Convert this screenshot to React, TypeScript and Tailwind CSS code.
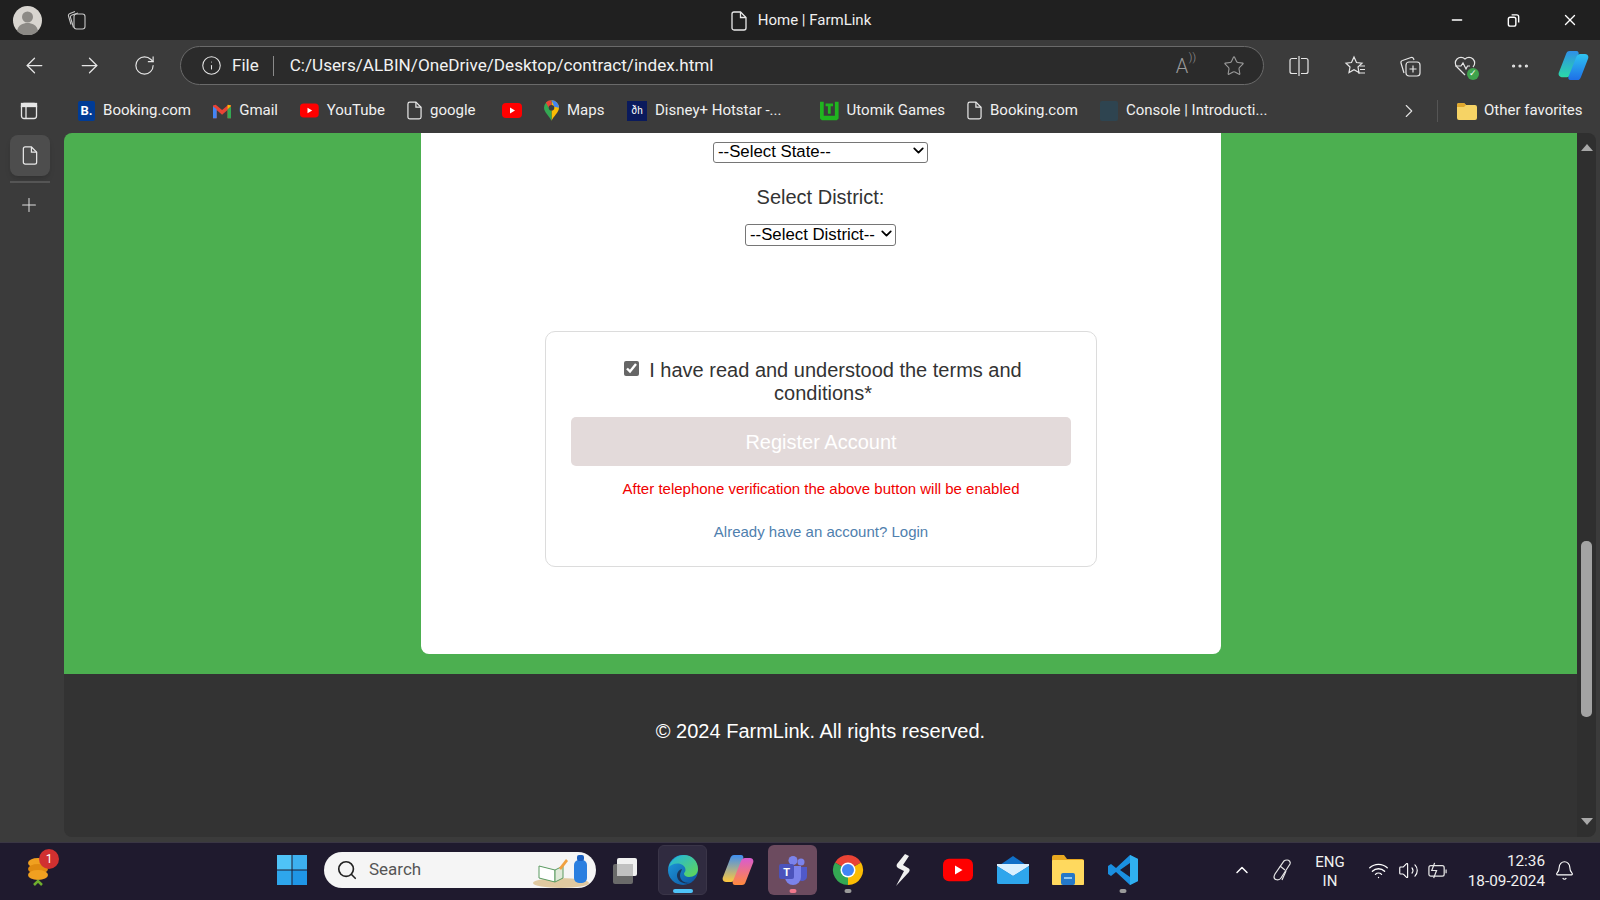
import React from "react";
import { ArrowLeft, ArrowRight, RotateCw, Info, Star, MoreHorizontal, ChevronRight, ChevronUp, ChevronDown, Plus, Minus, X, Search, Wifi, Bell, Volume2 } from "lucide-react";

const ui = "font-['Roboto','Noto_Sans',sans-serif]";

function Doc({ className = "w-[16px] h-[20px]" }: { className?: string }) {
  return (
    <svg viewBox="0 0 16 20" className={className} fill="none" stroke="#e8e8e8" strokeWidth="1.3">
      <path d="M3 1h6.5L15 6.5V17a2 2 0 0 1-2 2H3a2 2 0 0 1-2-2V3a2 2 0 0 1 2-2z" />
      <path d="M9.5 1v5.5H15" />
    </svg>
  );
}

function YT({ className = "w-[20px] h-[15px]" }: { className?: string }) {
  return (
    <svg viewBox="0 0 20 15" className={className}>
      <rect width="20" height="15" rx="4" fill="#f00" />
      <path d="M8 4.5l5 3-5 3z" fill="#fff" />
    </svg>
  );
}

function Edge() {
  return (
    <svg viewBox="0 0 32 32" className="w-[32px] h-[34px]">
      <defs>
        <linearGradient id="e1" x1="0" y1="0" x2="1" y2="1">
          <stop offset="0" stopColor="#1f9fe0" />
          <stop offset="1" stopColor="#0c4f9c" />
        </linearGradient>
        <linearGradient id="e2" x1="0" y1="0" x2="1" y2="1">
          <stop offset="0" stopColor="#1fb4e8" />
          <stop offset="1" stopColor="#63d84f" />
        </linearGradient>
      </defs>
      <circle cx="16" cy="16" r="15" fill="url(#e1)" />
      <path d="M1.500 14C4 5 11 1 17 1c8 0 14 6 14 14 0 5-4 8-9 8-3 0-5-1.500-5-3.500 0-1 1.500-1.500 1.500-3.500 0-4-4-6.500-8-6.500-4 0-7.500 2-9 4z" fill="url(#e2)" />
      <path d="M15 15c-4 1-6 5-4.500 9 1.500 4 7 6.500 12 5-6 0-9.500-3-9.500-7.500 0-3 1.500-4.500 2-6.500z" fill="#1f1a2e" opacity="0.7" />
    </svg>
  );
}

function Chrome() {
  return (
    <svg viewBox="0 0 32 32" className="w-[32px] h-[34px]">
      <path d="M16 16L3 8.5A15 15 0 0 1 29 8.5z" fill="#ea4335" />
      <path d="M16 16L29 8.5A15 15 0 0 1 16 31z" fill="#fbbc04" />
      <path d="M16 16L16 31A15 15 0 0 1 3 8.5z" fill="#34a853" />
      <circle cx="16" cy="16" r="7.5" fill="#fff" />
      <circle cx="16" cy="16" r="6" fill="#4285f4" />
    </svg>
  );
}

function Copilot({ className = "w-[32px] h-[32px]" }: { className?: string }) {
  return (
    <svg viewBox="0 0 32 32" className={className}>
      <defs>
        <linearGradient id="c1" x1="0" y1="0" x2="0" y2="1">
          <stop offset="0" stopColor="#2f8fe8" />
          <stop offset="1" stopColor="#2ad8a8" />
        </linearGradient>
        <linearGradient id="c2" x1="0" y1="0" x2="0" y2="1">
          <stop offset="0" stopColor="#2fc4f0" />
          <stop offset="1" stopColor="#1e6fe8" />
        </linearGradient>
      </defs>
      <path d="M12 1h7c2 0 3 2 2 4l-8 20c-1 2-2 3-4 3H4c-3 0-4-3-3-5l7-18c1-3 2-4 4-4z" fill="url(#c1)" />
      <path d="M20 31h-7c-2 0-3-2-2-4l8-20c1-2 2-3 4-3h5c3 0 4 3 3 5l-7 18c-1 3-2 4-4 4z" fill="url(#c2)" />
    </svg>
  );
}

function Copilot2() {
  return (
    <svg viewBox="0 0 32 32" className="w-[32px] h-[32px]">
      <defs>
        <linearGradient id="d1" x1="0" y1="0" x2="0" y2="1">
          <stop offset="0" stopColor="#3f8ef0" />
          <stop offset="1" stopColor="#ffc83d" />
        </linearGradient>
        <linearGradient id="d2" x1="0" y1="0" x2="0" y2="1">
          <stop offset="0" stopColor="#d95bd0" />
          <stop offset="1" stopColor="#ff8a3d" />
        </linearGradient>
      </defs>
      <path d="M12 1h7c2 0 3 2 2 4l-8 20c-1 2-2 3-4 3H4c-3 0-4-3-3-5l7-18c1-3 2-4 4-4z" fill="url(#d1)" />
      <path d="M20 31h-7c-2 0-3-2-2-4l8-20c1-2 2-3 4-3h5c3 0 4 3 3 5l-7 18c-1 3-2 4-4 4z" fill="url(#d2)" />
    </svg>
  );
}

function Teams() {
  return (
    <svg viewBox="0 0 32 32" className="w-[32px] h-[32px]">
      <circle cx="24" cy="8" r="3.500" fill="#7b83eb" />
      <circle cx="16" cy="6.500" r="4.500" fill="#7b83eb" />
      <path d="M21 13h9v9a5 5 0 0 1-9 3z" fill="#5059c9" />
      <path d="M8 12h16v11a7 7 0 0 1-16 0z" fill="#7b83eb" />
      <rect x="2" y="10" width="15" height="15" rx="2" fill="#4b53bc" />
      <text x="9.500" y="22" textAnchor="middle" fontSize="11" fontWeight="700" fill="#fff" fontFamily="Liberation Sans">T</text>
    </svg>
  );
}

function Slot({ children, dot, active, hover }: { children: React.ReactNode; dot?: "gray" | "pink" | "blue"; active?: boolean; hover?: boolean }) {
  return (
    <div className="relative w-[55px] h-[50px] flex items-center justify-center">
      {(active || hover) && (
        <div className={hover ? "absolute left-[3px] right-[3px] top-0 bottom-0 rounded-[6px] bg-[#6c4b5f]" : "absolute left-[3px] right-[3px] top-0 bottom-0 rounded-[6px] bg-[#302b40] border border-[#3a3548]"} />
      )}
      <div className="relative flex items-center justify-center">{children}</div>
      {dot === "gray" && <div className="absolute bottom-[2px] left-1/2 -translate-x-1/2 w-[7px] h-[4px] rounded-full bg-[#9a9a9a]" />}
      {dot === "pink" && <div className="absolute bottom-[2px] left-1/2 -translate-x-1/2 w-[7px] h-[4px] rounded-full bg-[#f0788c]" />}
      {dot === "blue" && <div className="absolute bottom-[2px] left-1/2 -translate-x-1/2 w-[20px] h-[4px] rounded-full bg-[#4fc3f7]" />}
    </div>
  );
}

function BM({ icon, label, w }: { icon: React.ReactNode; label?: string; w: string }) {
  return (
    <div className={`flex items-center gap-[8px] shrink-0 ${w}`}>
      {icon}
      {label && <span className="text-[15px] text-[#f0f0f0] whitespace-nowrap">{label}</span>}
    </div>
  );
}

export default function App() {
  return (
    <div className={`w-[1600px] h-[900px] flex flex-col overflow-hidden bg-[#3b3b3b] ${ui}`}>
      {/* title bar */}
      <div className="h-[40px] shrink-0 bg-[#202020] relative flex items-center pl-[13px]">
        <svg viewBox="0 0 29 29" className="w-[29px] h-[29px]">
          <circle cx="14.500" cy="14.500" r="14.500" fill="#d8d5d0" />
          <circle cx="14.500" cy="11" r="5.500" fill="#8c8a86" />
          <path d="M4 25c1-6 6-8 10.500-8S24 19 25 25a14.500 14.500 0 0 1-21 0z" fill="#8c8a86" />
        </svg>
        <svg viewBox="0 0 22 22" className="w-[22px] h-[22px] ml-[24px]" fill="none" stroke="#c8c8c8" strokeWidth="1.100">
          <rect x="8" y="5" width="11" height="15" rx="2.500" />
          <path d="M7.500 18.500 4.500 8.500a2 2 0 0 1 1.500-2.500l6-2" />
          <path d="M5 15.500 2.500 7a2 2 0 0 1 1.500-2.500l5-2" />
        </svg>
        <div className="flex-1 flex items-center justify-center gap-[11px] pl-[86px] pt-[1px]">
          <Doc />
          <span className="text-[15px] text-[#efefef] whitespace-nowrap">Home | FarmLink</span>
        </div>
        <div className="flex items-center w-[172px] shrink-0">
          <Minus className="w-[16px] h-[16px] text-white ml-[21px]" strokeWidth={2} />
          <svg viewBox="0 0 16 16" className="w-[15px] h-[15px] ml-[41px]" fill="none" stroke="#fff" strokeWidth="1.500">
            <rect x="2.500" y="4.500" width="8" height="9.500" rx="2" />
            <path d="M6 2h5.500a2 2 0 0 1 2 2v6" />
          </svg>
          <X className="w-[18px] h-[18px] text-white ml-[40px]" strokeWidth={1.800} />
        </div>
      </div>

      {/* address toolbar */}
      <div className="h-[47px] shrink-0 flex items-center pl-[22px] pr-[11px] pt-[4px]">
        <ArrowLeft className="w-[25px] h-[25px] text-[#e6e6e6]" strokeWidth={1.200} />
        <ArrowRight className="w-[25px] h-[25px] text-[#e6e6e6] ml-[30px]" strokeWidth={1.200} />
        <RotateCw className="w-[23px] h-[23px] text-[#e6e6e6] ml-[31px]" strokeWidth={1.200} />
        <div className="ml-[24px] w-[1084px] h-[39px] shrink-0 rounded-full border border-[#6a6a6a] bg-[#2b2b2b] flex items-center pl-[20px] pr-[18px]">
          <Info className="w-[21px] h-[21px] text-[#e6e6e6]" strokeWidth={1.200} />
          <span className="ml-[10px] text-[17px] text-[#f0f0f0]">File</span>
          <div className="w-px h-[20px] bg-[#8a8a8a] ml-[14px]" />
          <span className="ml-[16px] text-[17.150px] text-[#f2f2f2] whitespace-nowrap">C:/Users/ALBIN/OneDrive/Desktop/contract/index.html</span>
          <div className="flex-1" />
          <div className="relative w-[22px] h-[22px] flex items-center justify-center text-[#9a9a9a] text-[20px] font-light">A<span className="absolute right-[-3px] top-[-5px] text-[11px]">))</span></div>
          <Star className="w-[22px] h-[22px] text-[#9a9a9a] ml-[30px]" strokeWidth={1.200} />
        </div>
        <svg viewBox="0 0 22 22" className="w-[22px] h-[22px] ml-[24px]" fill="none" stroke="#e6e6e6" strokeWidth="1.200">
          <path d="M9 3.500H4a2 2 0 0 0-2 2v11a2 2 0 0 0 2 2h5M11 1v20M13 3.500h5a2 2 0 0 1 2 2v11a2 2 0 0 1-2 2h-5" />
        </svg>
        <svg viewBox="0 0 24 24" className="w-[24px] h-[24px] ml-[33px]" fill="none" stroke="#e6e6e6" strokeWidth="1.200">
          <path d="M11 3l2.500 5.500 5.500.6-4 3.900 1 5.500-5-2.800-5 2.800 1-5.500-4-3.900 5.500-.6z" />
          <path d="M17 12h5M17 15.500h5M15 19h7" />
        </svg>
        <svg viewBox="0 0 24 24" className="w-[24px] h-[24px] ml-[31px]" fill="none" stroke="#e6e6e6" strokeWidth="1.200">
          <rect x="8" y="8" width="14" height="14" rx="3" />
          <path d="M15 11.500v7M11.500 15h7" />
          <path d="M6 19 3 9a2 2 0 0 1 1.500-2.500L13 3.500a2 2 0 0 1 2.500 1L16 6" />
        </svg>
        <div className="relative ml-[31px] w-[24px] h-[24px]">
          <svg viewBox="0 0 24 24" className="w-[24px] h-[24px]" fill="none" stroke="#e6e6e6" strokeWidth="1.200">
            <path d="M12 21 4 13a5.500 5.500 0 0 1 8-8 5.500 5.500 0 0 1 8 8" />
            <path d="M2 12h6l2-3 3 6 1.500-3H17" />
          </svg>
          <div className="absolute right-[-2px] bottom-[-2px] w-[12px] h-[12px] rounded-full bg-[#3fa34d] flex items-center justify-center text-[9px] text-white">✓</div>
        </div>
        <MoreHorizontal className="w-[22px] h-[22px] text-[#e6e6e6] ml-[32px]" strokeWidth={1.500} />
        <Copilot className="w-[31px] h-[31px] ml-[27px]" />
      </div>

      {/* bookmarks */}
      <div className="h-[46px] shrink-0 flex items-center pl-[20px] pt-[1px]">
        <svg viewBox="0 0 18 18" className="w-[18px] h-[18px] shrink-0" fill="none" stroke="#e6e6e6" strokeWidth="1.300">
          <rect x="1.500" y="1.500" width="15" height="15" rx="2.500" />
          <rect x="1.500" y="1.500" width="15" height="3" fill="#e6e6e6" />
          <path d="M6 5v11.500" />
        </svg>
        <div className="flex items-center gap-[22px] ml-[40px]">
          <BM w="w-[113px]" label="Booking.com" icon={<div className="w-[19px] h-[20px] bg-[#003b95] rounded-[2px] flex items-center justify-center text-white text-[13px] font-bold">B.</div>} />
          <BM w="w-[65px]" label="Gmail" icon={
            <svg viewBox="0 0 20 16" className="w-[20px] h-[16px]">
              <path d="M0 2l3-1 7 6 7-6 3 1v14h-4V7l-6 5-6-5v9H0z" fill="#ea4335" />
              <path d="M0 3v13h4V6z" fill="#4285f4" />
              <path d="M20 3v13h-4V6z" fill="#34a853" />
              <path d="M20 2l-4 4V1z" fill="#fbbc04" />
            </svg>
          } />
          <BM w="w-[85px]" label="YouTube" icon={<YT />} />
          <BM w="w-[73px]" label="google" icon={<Doc className="w-[15px] h-[19px]" />} />
          <BM w="w-[20px]" icon={<YT />} />
          <BM w="w-[61px]" label="Maps" icon={
            <svg viewBox="0 0 16 22" className="w-[15px] h-[21px]">
              <path d="M8 0a8 8 0 0 1 8 8c0 5-6 9-8 14z" fill="#fbbc04" />
              <path d="M8 0a8 8 0 0 0-8 8c0 5 6 9 8 14z" fill="#34a853" />
              <path d="M2 2.500a8 8 0 0 1 6-2.500v5L5 8z" fill="#ea4335" />
              <path d="M8 0a8 8 0 0 1 8 8l-5-1z" fill="#4285f4" />
              <circle cx="8" cy="8" r="3" fill="#3b3b3b" />
            </svg>
          } />
          <BM w="w-[155px]" label="Disney+ Hotstar -..." icon={<div className="w-[20px] h-[20px] bg-[#0a1a5c] flex items-center justify-center text-white text-[10px]">ðh</div>} />
        </div>
        <div className="flex items-center gap-[22px] ml-[38px]">
          <BM w="w-[125px]" label="Utomik Games" icon={
            <svg viewBox="0 0 20 20" className="w-[20px] h-[20px]">
              <path d="M0 0h4v15h12V0h4v18l-2 2H2l-2-2z" fill="#1fb51f" />
              <path d="M6 2h8v3h-2.500v8h-3V5H6z" fill="#1fb51f" />
            </svg>
          } />
          <BM w="w-[111px]" label="Booking.com" icon={<Doc className="w-[15px] h-[19px]" />} />
          <BM w="w-[168px]" label="Console | Introducti..." icon={<div className="w-[18px] h-[20px] bg-[#2e4450] rounded-[2px]" />} />
        </div>
        <ChevronRight className="w-[22px] h-[22px] text-[#e0e0e0] ml-[130px] shrink-0" strokeWidth={1.200} />
        <div className="w-px h-[22px] bg-[#555] ml-[17px]" />
        <div className="flex items-center gap-[7px] ml-[19px]">
          <svg viewBox="0 0 20 18" className="w-[20px] h-[18px]">
            <path d="M0 3a2 2 0 0 1 2-2h5l2 2h9a2 2 0 0 1 2 2v11a2 2 0 0 1-2 2H2a2 2 0 0 1-2-2z" fill="#f6d365" />
            <path d="M0 3a2 2 0 0 1 2-2h5l2 2-2 2H0z" fill="#e0a82e" />
          </svg>
          <span className="text-[15px] text-[#f0f0f0] whitespace-nowrap">Other favorites</span>
        </div>
      </div>

      {/* middle */}
      <div className="h-[704px] shrink-0 flex">
        <div className="w-[64px] shrink-0 flex flex-col items-center pt-[2px]">
          <div className="w-[40px] h-[41px] rounded-[8px] bg-[#4d4d4d] flex items-center justify-center mr-[4px] shadow-md">
            <Doc className="w-[16px] h-[19px]" />
          </div>
          <div className="w-[40px] h-[2px] bg-[#555] mt-[5px] mr-[4px]" />
          <Plus className="w-[22px] h-[22px] text-[#e0e0e0] mt-[11px] mr-[6px]" strokeWidth={1.100} />
        </div>

        <div className="w-[1513px] shrink-0 flex flex-col rounded-tl-[8px] rounded-bl-[8px] overflow-hidden font-['Liberation_Sans',Arial,sans-serif]">
          <div className="h-[541px] shrink-0 bg-[#4caf50] flex justify-center">
            <div className="w-[800px] h-[521px] bg-white rounded-b-[8px] flex flex-col items-center pt-[7px] ml-[1px]">
              <div className="relative w-[215px] h-[21px] mr-[1px]">
                <select className="appearance-none w-full h-full bg-white border border-[#767676] rounded-[3px] text-[16.800px] leading-none text-black pl-[4px]">
                  <option>--Select State--</option>
                </select>
                <ChevronDown className="absolute right-[1px] top-[2px] w-[17px] h-[17px] text-black pointer-events-none" strokeWidth={2.500} />
              </div>
              <div className="mt-[25px] text-[20px] leading-[23px] text-[#333] mr-[1px]">Select District:</div>
              <div className="relative mt-[14px] w-[151px] h-[22px] mr-[1px]">
                <select className="appearance-none w-full h-full bg-white border border-[#767676] rounded-[3px] text-[16.800px] leading-none text-black pl-[4px]">
                  <option>--Select District--</option>
                </select>
                <ChevronDown className="absolute right-[1px] top-[2px] w-[17px] h-[17px] text-black pointer-events-none" strokeWidth={2.500} />
              </div>
              <div className="mt-[86px] w-[552px] h-[236px] border border-[#dcdcdc] rounded-[10px] flex flex-col items-center px-[25px] pt-[27px]">
                <label className="text-[20px] leading-[23px] text-[#333] text-center w-[420px] ml-[4px]">
                  <input type="checkbox" defaultChecked className="w-[15px] h-[15px] mr-[10px] accent-[#666] align-[1px]" />
                  I have read and understood the terms and conditions*
                </label>
                <div className="mt-[12px] w-[500px] h-[49px] shrink-0 rounded-[5px] bg-[#e3dada] flex items-center justify-center text-white text-[20px]">Register Account</div>
                <div className="mt-[13px] text-[15px] leading-[19px] text-[#f00000]">After telephone verification the above button will be enabled</div>
                <div className="mt-[24px] text-[15px] leading-[19px] text-[#4f80ae]">Already have an account? Login</div>
              </div>
            </div>
          </div>
          <div className="h-[163px] shrink-0 bg-[#333333] flex justify-center pt-[46px]">
            <div className="text-[20px] leading-[23px] text-white">© 2024 FarmLink. All rights reserved.</div>
          </div>
        </div>

        <div className="w-[19px] shrink-0 bg-[#2f2f2f] rounded-r-[8px] flex flex-col items-center pt-[11px] pb-[12px]">
          <div className="w-0 h-0 border-l-[6px] border-r-[6px] border-b-[7px] border-l-transparent border-r-transparent border-b-[#a8a8a8]" />
          <div className="w-[11px] h-[176px] rounded-[5px] bg-[#a3a3a3] mt-[390px]" />
          <div className="flex-1" />
          <div className="w-0 h-0 border-l-[6px] border-r-[6px] border-t-[7px] border-l-transparent border-r-transparent border-t-[#a8a8a8]" />
        </div>
      </div>

      <div className="h-[5px] shrink-0" />

      {/* taskbar */}
      <div className="h-[58px] shrink-0 bg-[#1f1a2e] border-t border-[#3a3644] flex items-center pb-[3px]">
        <div className="relative w-[264px] shrink-0 h-full">
          <svg viewBox="0 0 30 36" className="absolute left-[25px] top-[8px] w-[30px] h-[36px]">
            <ellipse cx="13" cy="12" rx="10" ry="5" fill="#f0a020" />
            <ellipse cx="13" cy="18" rx="10" ry="5" fill="#e08a10" />
            <ellipse cx="13" cy="24" rx="10" ry="5" fill="#f0a020" />
            <path d="M9 34l4-4 4 4" fill="none" stroke="#6fae2e" strokeWidth="2.500" />
          </svg>
          <div className="absolute left-[39px] top-[6px] w-[20px] h-[20px] rounded-full bg-[#d03030] flex items-center justify-center text-white text-[12px]">1</div>
        </div>
        <div className="w-[55px] h-[50px] shrink-0 flex items-center justify-center">
          <svg viewBox="0 0 30 30" className="w-[30px] h-[30px]">
            <rect width="14.500" height="14.500" fill="#4fc3f7" />
            <rect x="15.500" width="14.500" height="14.500" fill="#3db0ef" />
            <rect y="15.500" width="14.500" height="14.500" fill="#2ea6ec" />
            <rect x="15.500" y="15.500" width="14.500" height="14.500" fill="#1f96e6" />
          </svg>
        </div>
        <div className="ml-[5px] w-[272px] h-[36px] shrink-0 rounded-full bg-[#f5f5f5] flex items-center pl-[12px] relative">
          <Search className="w-[22px] h-[22px] text-[#222]" strokeWidth={1.800} />
          <span className="ml-[11px] text-[17px] text-[#555]">Search</span>
          <svg viewBox="0 0 60 36" className="absolute right-[5px] top-0 w-[60px] h-[36px]">
            <ellipse cx="30" cy="31" rx="28" ry="5" fill="#e0c9a0" />
            <path d="M8 14l16 4v12l-16-4z" fill="#fff" stroke="#5a9a60" />
            <path d="M24 18l8-4v12l-8 4z" fill="#dfe9d8" stroke="#5a9a60" />
            <path d="M28 16l7-9 2 2-7 9z" fill="#f0a040" />
            <rect x="43" y="8" width="13" height="23" rx="5" fill="#2a7fe0" />
            <rect x="46" y="3" width="7" height="6" rx="2" fill="#1a5fc0" />
          </svg>
        </div>
        <div className="ml-[4px] flex items-center shrink-0">
          <Slot>
            <svg viewBox="0 0 32 30" className="w-[32px] h-[30px]">
              <rect x="1" y="9" width="20" height="20" rx="2" fill="#6a6a6a" />
              <rect x="5" y="3" width="20" height="18" rx="2" fill="#f0f0f0" />
              <rect x="5" y="9" width="16" height="12" fill="#c0c0c0" />
            </svg>
          </Slot>
          <Slot active dot="blue"><Edge /></Slot>
          <Slot><Copilot2 /></Slot>
          <Slot hover dot="pink"><Teams /></Slot>
          <Slot dot="gray"><Chrome /></Slot>
          <Slot>
            <svg viewBox="0 0 18 32" className="w-[18px] h-[32px]">
              <path d="M11 0 3 10c-1 2 0 3 1 4l6 3-8 15 13-14c1-2 1-3-1-4l-5-3 6-9z" fill="#f0f0f0" />
            </svg>
          </Slot>
          <Slot><YT className="w-[30px] h-[24px]" /></Slot>
          <Slot>
            <svg viewBox="0 0 32 28" className="w-[32px] h-[28px]">
              <path d="M16 0l16 11v15a2 2 0 0 1-2 2H2a2 2 0 0 1-2-2V11z" fill="#1070c8" />
              <path d="M0 8h32v2L16 20 0 10z" fill="#d8f0ff" />
              <path d="M0 10l16 10 16-10v16a2 2 0 0 1-2 2H2a2 2 0 0 1-2-2z" fill="#2ea6ec" />
            </svg>
          </Slot>
          <Slot>
            <svg viewBox="0 0 32 30" className="w-[32px] h-[30px]">
              <path d="M0 2a2 2 0 0 1 2-2h10l3 4h15a2 2 0 0 1 2 2v22a2 2 0 0 1-2 2H2a2 2 0 0 1-2-2z" fill="#e8a820" />
              <rect y="5" width="32" height="25" rx="1" fill="#ffd95e" />
              <rect x="9" y="18" width="14" height="12" rx="2" fill="#2478c8" />
              <rect x="12" y="22" width="8" height="2" fill="#8fc8f0" />
            </svg>
          </Slot>
          <Slot dot="gray">
            <svg viewBox="0 0 32 32" className="w-[32px] h-[32px]">
              <path d="M23 1l8 4v22l-8 4L9 18l-5 4-3-2v-8l3-2 5 4z" fill="#1a8fe0" />
              <path d="M23 1l8 4v22l-8 4z" fill="#30b0f0" />
              <path d="M23 9 13 16l10 7z" fill="#1f1a2e" />
            </svg>
          </Slot>
        </div>
        <ChevronUp className="w-[20px] h-[20px] text-white ml-[82px] shrink-0" strokeWidth={1.800} />
        <svg viewBox="0 0 22 24" className="w-[22px] h-[24px] ml-[19px] shrink-0" fill="none" stroke="#e6e6e6" strokeWidth="1.200">
          <path d="M16 2c2 0 4 2 3 4L10 20c-2 3-7 2-7-1 0-1 .5-2 1-3L13 3c1-1 2-1 3-1z" />
          <path d="M9 8l5 4M15 13l-4 9" />
        </svg>
        <div className="ml-[18px] w-[38px] text-center text-[15px] leading-[19px] text-[#f0f0f0] shrink-0 pt-[3px]">ENG<br />IN</div>
        <Wifi className="w-[21px] h-[21px] text-white ml-[19px] shrink-0" strokeWidth={1.500} />
        <Volume2 className="w-[21px] h-[21px] text-white ml-[9px] shrink-0" strokeWidth={1.300} />
        <svg viewBox="0 0 22 22" className="w-[21px] h-[21px] ml-[8px] shrink-0" fill="none" stroke="#e6e6e6" strokeWidth="1.300">
          <rect x="2" y="6" width="16" height="11" rx="2" />
          <path d="M20 10v4" />
          <path d="M8 3 5 11h5l-3 8" stroke="#e6e6e6" />
        </svg>
        <div className="ml-[18px] w-[79px] text-right text-[15.300px] leading-[20px] text-[#f0f0f0] shrink-0 whitespace-nowrap pt-[2px]">12:36<br />18-09-2024</div>
        <Bell className="w-[21px] h-[21px] text-white ml-[9px] shrink-0" strokeWidth={1.300} />
      </div>
    </div>
  );
}
